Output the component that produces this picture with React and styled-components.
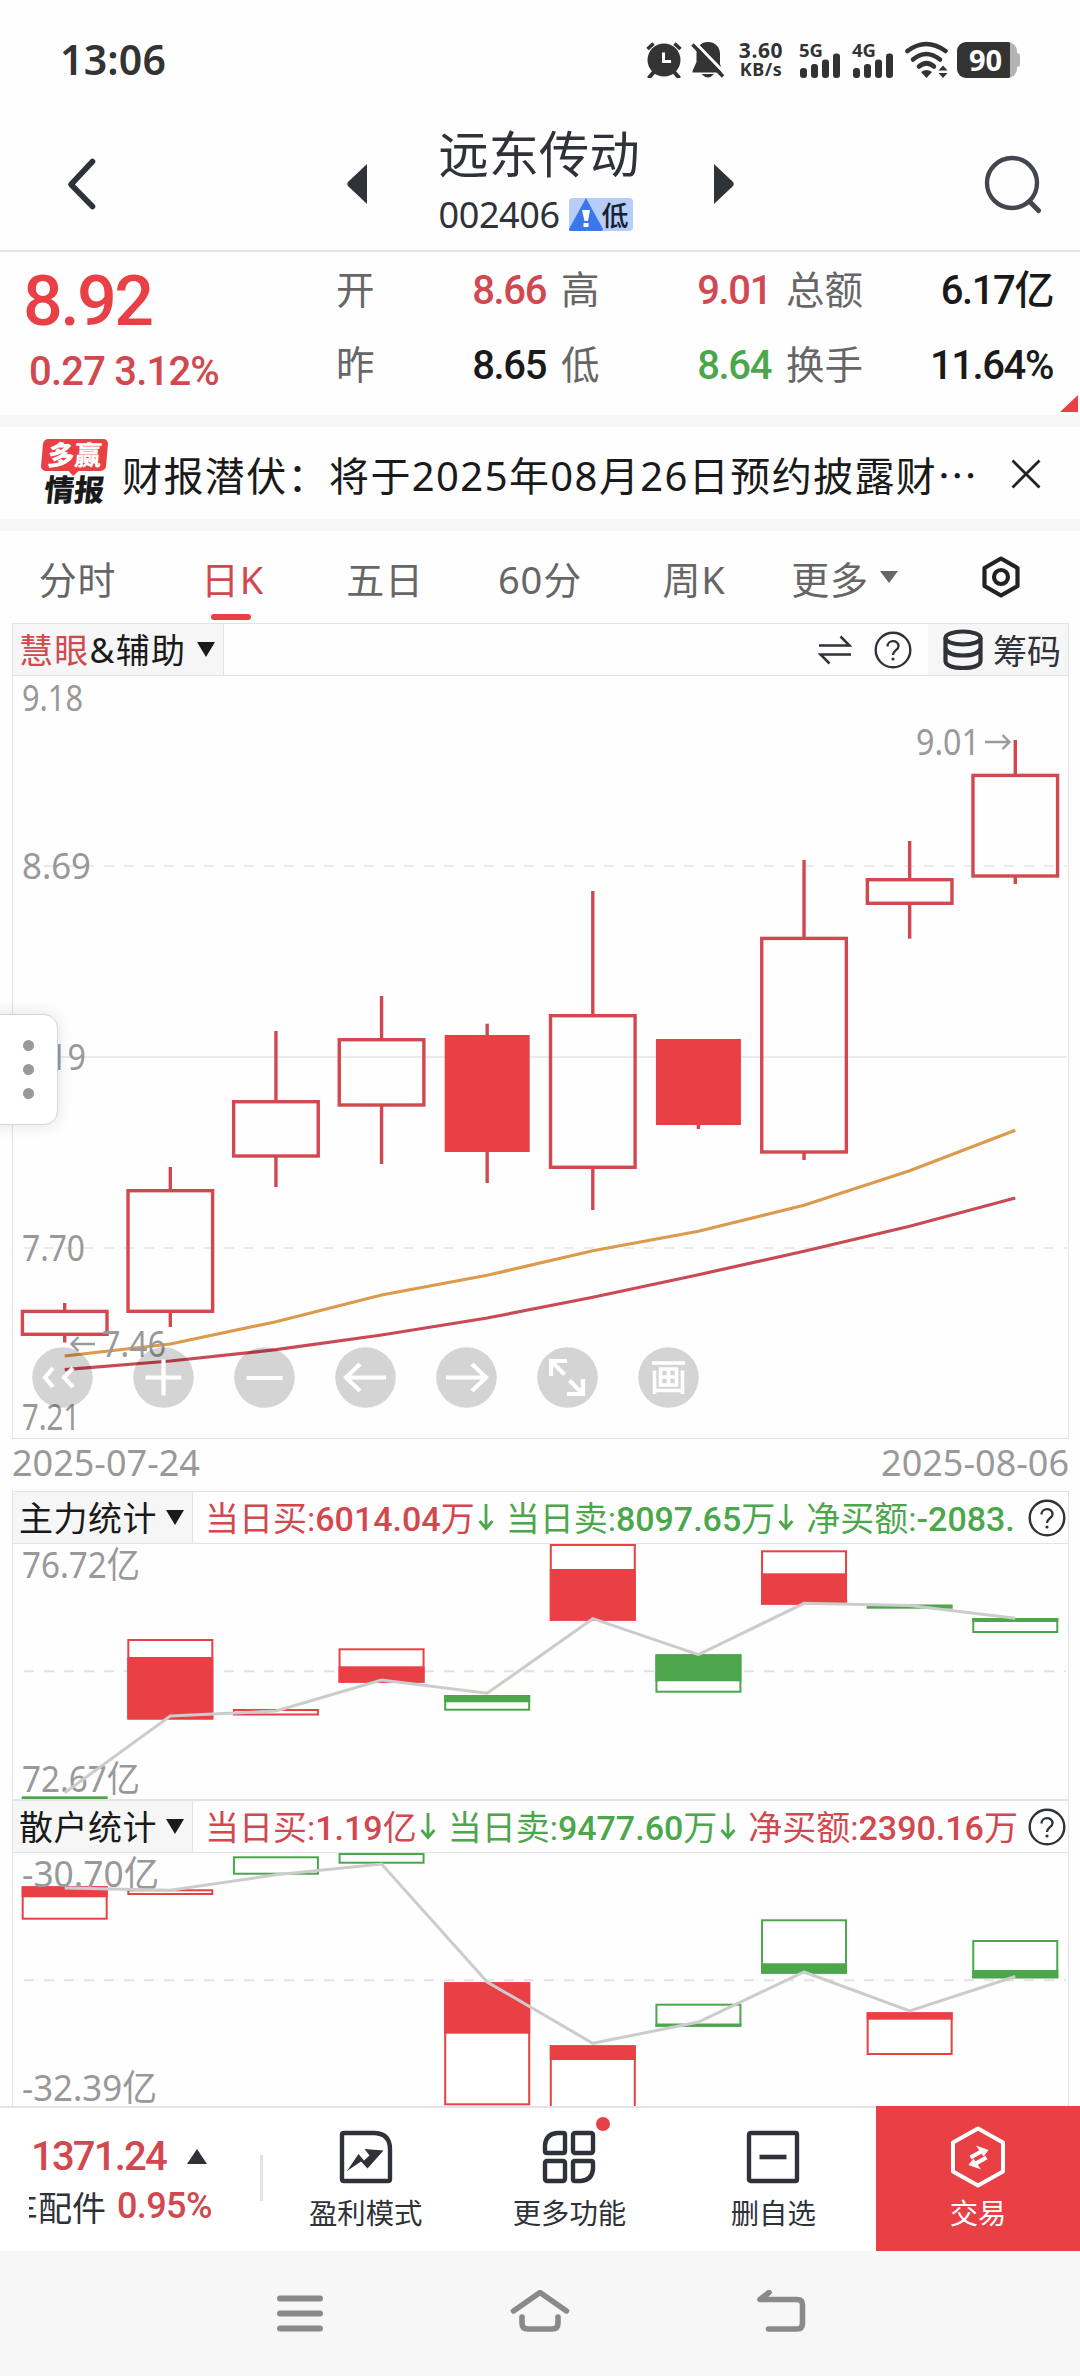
import React from 'react';
import styled, { createGlobalStyle, css } from 'styled-components';

const RED = '#e84045';
const LINE_RED = '#d2484f';
const GREEN = '#4ca64c';
const DARK = '#2f3239';
const BORDER = '#e3e3e3';

const cjk = "'Noto Sans CJK SC', sans-serif";
const sans = `'Noto Sans', ${cjk}`;
const din = `Roboto, ${cjk}`;

const candles = [
    { high: 1303, top: 1309.7, bottom: 1336, low: 1342.5 },
    { high: 1167, top: 1189, bottom: 1313, low: 1327 },
    { high: 1031, top: 1100, bottom: 1157.7, low: 1187 },
    { high: 996, top: 1038, bottom: 1106.7, low: 1164 },
    { high: 1023.7, top: 1035, bottom: 1152, low: 1183, filled: true },
    { high: 891, top: 1014, bottom: 1169, low: 1210 },
    { high: 1039, top: 1039, bottom: 1125, low: 1129, filled: true },
    { high: 860, top: 936.7, bottom: 1153.7, low: 1160 },
    { high: 841, top: 878, bottom: 905, low: 938.7 },
    { high: 740, top: 773.7, bottom: 877.7, low: 884 },
];

const maShort = [1356, 1344, 1321.7, 1295, 1275.3, 1250.7, 1231.3, 1205.3, 1170.7, 1130.3];
const maLong = [1369.7, 1361, 1349.7, 1335, 1318, 1297.3, 1274.7, 1251.3, 1226.3, 1198];

// top / bottom of every bar, and the part of it that is filled
const mainBars = [
    { t: 1796.3, b: 1799, f: [1796.3, 1799], c: GREEN },
    { t: 1639, b: 1719.5, f: [1657, 1719.5], c: RED },
    { t: 1709, b: 1715.5, c: RED },
    { t: 1648.3, b: 1682.7, f: [1666.3, 1682.7], c: RED },
    { t: 1695, b: 1710.7, f: [1695, 1702.3], c: GREEN },
    { t: 1544, b: 1620.7, f: [1569, 1620.7], c: RED },
    { t: 1654.3, b: 1692.7, f: [1654.3, 1681.3], c: GREEN },
    { t: 1550.3, b: 1604.7, f: [1573.3, 1604.7], c: RED },
    { t: 1604.5, b: 1608.7, f: [1604.5, 1608.7], c: GREEN },
    { t: 1618, b: 1633, f: [1618, 1622], c: GREEN },
];
const mainLine = [1792.7, 1716, 1711, 1680, 1693.3, 1618.7, 1654.7, 1603.3, 1605.5, 1618.3];

const retailBars = [
    { t: 1886.3, b: 1919.7, f: [1886.3, 1897.3], c: RED },
    { t: 1889.3, b: 1895, c: RED },
    { t: 1856.3, b: 1874.7, c: GREEN },
    { t: 1853, b: 1863.7, c: GREEN },
    { t: 1982.3, b: 2105.3, f: [1982.3, 2033.7], c: RED },
    { t: 2045.3, b: 2120, f: [2045.3, 2060], c: RED },
    { t: 2003.7, b: 2026.7, f: [2023.5, 2026.7], c: GREEN },
    { t: 1919.3, b: 1973.7, f: [1963.3, 1973.7], c: GREEN },
    { t: 2012.3, b: 2055, f: [2012.3, 2019.7], c: RED },
    { t: 1940, b: 1978.3, f: [1970, 1978.3], c: GREEN },
];
const retailLine = [1888, 1890.3, 1874.7, 1864, 1982, 2043.3, 2022, 1972, 2011, 1976.5];

const xAt = (i) => 64.7 + i * 105.62;
const toPoints = (ys) => ys.map((y, i) => `${xAt(i)},${y}`).join(' ');

/* ---------- small icons ---------- */

const Alarm = () => (
    <svg width="38" height="38" viewBox="0 0 38 38">
        <circle cx="19" cy="20" r="16.5" fill="#333" />
        <path d="M2.5 9 8.5 3.5M35.5 9 29.5 3.5" stroke="#333" strokeWidth="3.6" />
        <path d="M8 33 4.5 37M30 33 33.5 37" stroke="#333" strokeWidth="4" strokeLinecap="round" />
        <path d="M18.5 12.5V21.5H26" fill="none" stroke="#fff" strokeWidth="3" />
    </svg>
);

const BellOff = () => (
    <svg width="34" height="38" viewBox="0 0 34 38">
        <path d="M17 2C9 2 5.5 8 5.5 14V22L1.5 31V32.5H32L29 24V14C29 8 25 2 17 2Z" fill="#333" />
        <path d="M10.5 34H23Q17 41 10.5 34Z" fill="#333" />
        <path d="M4 2.5 34 33.5" stroke="#fff" strokeWidth="3" />
        <path d="M1.5 4.5 32 36.5" stroke="#333" strokeWidth="3.4" />
    </svg>
);

const Signal = () => (
    <svg width="42" height="26" viewBox="0 0 42 26">
        <rect x="1" y="15" width="7" height="10" rx="3" fill="#333" />
        <rect x="12" y="11" width="7" height="14" rx="3" fill="#333" />
        <rect x="23" y="6.5" width="7" height="18.5" rx="3" fill="#333" />
        <rect x="34" y="0.5" width="7" height="24.5" rx="3" fill="#333" />
    </svg>
);

const Wifi = () => (
    <svg width="46" height="38" viewBox="0 0 46 38">
        <g fill="none" stroke="#333" strokeWidth="4.6" strokeLinecap="round">
            <path d="M3.5 11Q22 -3 41.5 11" />
            <path d="M9 19.5Q22 8.5 36 19.5" />
            <path d="M15 26.5Q22.5 20 30 26.5" />
        </g>
        <path d="M17 32Q22.5 28 28 32L22.5 38Z" fill="#333" />
        <path d="M34.5 30.5 39 25.5 43.5 30.5ZM34.5 33 39 38 43.5 33Z" fill="#333" />
    </svg>
);

const Help = () => (
    <svg width="38" height="38" viewBox="0 0 38 38">
        <circle cx="19" cy="19" r="17.3" fill="#fff" stroke={DARK} strokeWidth="2.4" />
        <path d="M13.5 15.5C13.5 8.5 24.5 8.5 24.5 15.2C24.5 19 19 19.5 19 24" fill="none" stroke={DARK} strokeWidth="2.3" />
        <circle cx="19" cy="28" r="1.6" fill={DARK} />
    </svg>
);

const DownArrow = ({ color = GREEN }) => (
    <svg width="16" height="28" viewBox="0 0 16 28">
        <path d="M8 1V25M1.5 18 8 25.5 14.5 18" fill="none" stroke={color} strokeWidth="2.8" />
    </svg>
);

const Stack = () => (
    <svg width="42" height="42" viewBox="0 0 42 42">
        <g fill="none" stroke={DARK} strokeWidth="4.2">
            <ellipse cx="21" cy="9" rx="17.5" ry="6.5" />
            <path d="M3.5 9V32C3.5 36.5 11 39 21 39S38.5 36.5 38.5 32V9" />
            <path d="M3.5 19.5C5 24 12 26.5 21 26.5S37 24 38.5 19.5" />
        </g>
    </svg>
);

/* ---------- charts ---------- */

const Axis = ({ x = 22, y, w, children }) => (
    <AxisText x={x} y={y} textLength={w} lengthAdjust="spacingAndGlyphs">{children}</AxisText>
);

const SubChart = ({ top, height, mid, bars, line, labels }) => (
    <ChartSvg width="1056" height={height} viewBox={`12 ${top} 1056 ${height}`}>
        <line x1="24" x2="1066" y1={mid} y2={mid} stroke="#e2e2e2" strokeWidth="2" strokeDasharray="10 10" />
        {bars.map(({ t, b, f, c }, i) => (
            <g key={i}>
                {b - t > 5 && (
                    <rect x={xAt(i) - 42} y={t + 1} width="84" height={b - t - 2} fill="#fff" stroke={c} strokeWidth="2" />
                )}
                {f && <rect x={xAt(i) - 43} y={f[0]} width="86" height={f[1] - f[0]} fill={c} />}
            </g>
        ))}
        {labels.map(([text, y, w]) => (
            <Axis key={text} y={y} w={w}>{text}</Axis>
        ))}
        <polyline points={toPoints(line)} fill="none" stroke="#ccc" strokeWidth="3" />
    </ChartSvg>
);

const CandleChart = () => (
    <ChartSvg width="1056" height="762" viewBox="12 676 1056 762">
        <g stroke="#ebebeb" strokeWidth="2">
            <line x1="44" x2="1067" y1="866" y2="866" strokeDasharray="10 10" />
            <line x1="12" x2="1067" y1="1057" y2="1057" />
            <line x1="24" x2="1067" y1="1248" y2="1248" strokeDasharray="10 10" />
        </g>
        {candles.map(({ high, top, bottom, low, filled }, i) => (
            <g key={i} stroke={LINE_RED} strokeWidth="3.4">
                <line x1={xAt(i)} x2={xAt(i)} y1={high} y2={top + 1} />
                <line x1={xAt(i)} x2={xAt(i)} y1={bottom - 1} y2={low} />
                {filled ? (
                    <rect x={xAt(i) - 42.5} y={top} width="85" height={bottom - top} fill={RED} stroke="none" />
                ) : (
                    <rect x={xAt(i) - 42.3} y={top + 1.7} width="84.6" height={bottom - top - 3.4} fill="none" />
                )}
            </g>
        ))}
        <polyline points={toPoints(maShort)} fill="none" stroke="#db9a4c" strokeWidth="3.2" />
        <polyline points={toPoints(maLong)} fill="none" stroke="#c94a55" strokeWidth="3.2" />
        <Axis y={711} w={61}>9.18</Axis>
        <Axis y={879} w={69}>8.69</Axis>
        <Axis y={1070} w={64}>8.19</Axis>
        <Axis y={1261} w={63}>7.70</Axis>
        <Axis y={1430} w={58}>7.21</Axis>
        <Axis x={916} y={755} w={64}>9.01</Axis>
        <Axis x={102} y={1357} w={64}>7.46</Axis>
        <g fill="none" stroke="#999" strokeWidth="2.4">
            <path d="M985 742H1009M1002.5 735 1009.5 742 1002.5 749" />
            <path d="M95 1344H72M78.5 1337 71.5 1344 78.5 1351" />
        </g>
    </ChartSvg>
);

const controls = [
    'M21 21 13 30.5 21 40M41 21 32 30.5 41 40',
    'M30.5 12.5V48.5M12.5 30.5H48.5',
    'M12.5 31H48.5',
    'M51 30.5H12M25 17 11 30.5 25 44',
    'M10 30.5H49M36 17 50 30.5 36 44',
    'M14 29V14H30M14 14 27.5 27.5M46 32V47H30M46 47 32.5 33.5',
];

const App = () => {
    return (
        <>
            <GlobalStyle />
            <Screen>
                <StatusBar>
                    <Clock>13:06</Clock>
                    <StatusRight>
                        <Alarm />
                        <BellBox><BellOff /></BellBox>
                        <Speed><b>3.60</b><span>KB/s</span></Speed>
                        <Network><span>5G</span><Signal /></Network>
                        <Network $last><span>4G</span><Signal /></Network>
                        <Wifi />
                        <Battery><span>90</span></Battery>
                    </StatusRight>
                </StatusBar>

                <Header>
                    <svg width="34" height="54" viewBox="0 0 34 54">
                        <path d="M28.5 4.5 7 27.5 28.5 49.5" fill="none" stroke={DARK} strokeWidth="5.6" strokeLinecap="round" strokeLinejoin="round" />
                    </svg>
                    <TitleGroup>
                        <svg width="20" height="40" viewBox="0 0 20 40"><path d="M20 0V40L1.5 22.5Q-1 20 1.5 17.5Z" fill={DARK} /></svg>
                        <Title>
                            <h1>远东传动</h1>
                            <CodeRow>
                                <span>002406</span>
                                <RiskTag>
                                    <svg width="34" height="33" viewBox="0 0 34 33">
                                        <path d="M17 0 34 31Q34 33 32 33H2Q-1 33 0.5 30Z" fill="#3b77ec" />
                                        <path d="M13 12H21L19 23H15.5Z" fill="#fff" />
                                        <rect x="14.5" y="25" width="5" height="4" fill="#fff" />
                                    </svg>
                                    <em>低</em>
                                </RiskTag>
                            </CodeRow>
                        </Title>
                        <svg width="20" height="40" viewBox="0 0 20 40"><path d="M0 0V40L18.5 22.5Q21 20 18.5 17.5Z" fill={DARK} /></svg>
                    </TitleGroup>
                    <svg width="58" height="60" viewBox="0 0 58 60">
                        <circle cx="28" cy="29" r="25" fill="none" stroke="#44464f" strokeWidth="4.4" />
                        <path d="M45.5 47.5 54.5 56.5" stroke="#44464f" strokeWidth="5" strokeLinecap="round" />
                    </svg>
                </Header>

                <Quote>
                    <Price>
                        <strong>8.92</strong>
                        <span>0.27 3.12%</span>
                    </Price>
                    <QuoteGrid>
                        <Label>开</Label><Value $color={LINE_RED}>8.66</Value>
                        <Label>高</Label><Value $color={LINE_RED}>9.01</Value>
                        <Label>总额</Label><Value>6.17亿</Value>
                        <Label>昨</Label><Value>8.65</Value>
                        <Label>低</Label><Value $color={GREEN}>8.64</Value>
                        <Label>换手</Label><Value>11.64%</Value>
                    </QuoteGrid>
                    <Corner />
                </Quote>

                <News>
                    <NewsLogo>
                        <NewsBubble>多赢</NewsBubble>
                        <NewsWord>情报</NewsWord>
                    </NewsLogo>
                    <NewsText>财报潜伏：将于2025年08月26日预约披露财<i>…</i></NewsText>
                    <svg width="32" height="32" viewBox="0 0 32 32">
                        <path d="M2.5 2.5 29.5 29.5M29.5 2.5 2.5 29.5" stroke="#222" strokeWidth="2.8" />
                    </svg>
                </News>

                <Tabs>
                    <Tab $w={155}>分时</Tab>
                    <Tab $w={155} $active>日K</Tab>
                    <Tab $w={150}>五日</Tab>
                    <Tab $w={160}>60分</Tab>
                    <Tab $w={148}>周K</Tab>
                    <Tab $w={153}>更多<Caret $w={18} $h={12} $color="#666" /></Tab>
                    <Settings>
                        <svg width="38" height="42" viewBox="0 0 38 42">
                            <path d="M19 2.5 35.5 12V30L19 39.5 2.5 30V12Z" fill="none" stroke="#222" strokeWidth="4.2" strokeLinejoin="round" />
                            <circle cx="19" cy="21" r="7" fill="none" stroke="#222" strokeWidth="4.2" />
                        </svg>
                    </Settings>
                </Tabs>

                <Panel>
                    <PanelHead>
                        <PanelName $w={211} $gap={1.3}><span><em>慧眼</em>&amp;辅助</span><Caret $w={18} $h={15} /></PanelName>
                        <HeadTools>
                            <svg width="34" height="32" viewBox="0 0 34 32">
                                <path d="M1 11.5H31.5L22.5 2.5M33 20.5H2.5L11.5 29.5" fill="none" stroke={DARK} strokeWidth="2.5" />
                            </svg>
                            <Help />
                            <Chips><Stack />筹码</Chips>
                        </HeadTools>
                    </PanelHead>
                    <CandleChart />
                    <Controls>
                        {controls.map((d, i) => (
                            <svg key={i} width="61" height="61" viewBox="0 0 61 61">
                                <circle cx="30.5" cy="30.5" r="30.3" fill="#000" fillOpacity="0.165" />
                                <path d={d} fill="none" stroke="#fff" strokeWidth="4.2" />
                            </svg>
                        ))}
                        <svg width="61" height="61" viewBox="0 0 61 61">
                            <circle cx="30.5" cy="30.5" r="30.3" fill="#000" fillOpacity="0.165" />
                            <path d="M14 16H47M16.5 23.5V47M44.5 23.5V47M16.5 43.5H44.5M22.5 22H38.5V38H22.5ZM30.5 22V38M22.5 30H38.5" fill="none" stroke="#fff" strokeWidth="3.6" />
                        </svg>
                    </Controls>
                    <SideHandle><i /><i /><i /></SideHandle>
                </Panel>

                <Dates><span>2025-07-24</span><span>2025-08-06</span></Dates>

                <Panel>
                    <PanelHead>
                        <PanelName $w={180} $gap={0.5}>主力统计<Caret $w={18} $h={15} /></PanelName>
                        <Stats>
                            <Stat $color={LINE_RED}>当日买:<b>6014.04</b>万</Stat><DownArrow />
                            <Stat $color={GREEN}>当日卖:<b>8097.65</b>万</Stat><DownArrow />
                            <Stat $color={GREEN}>净买额:<b>-2083.</b></Stat>
                        </Stats>
                        <Help />
                    </PanelHead>
                    <SubChart
                        top={1544} height={255} mid={1671.3} bars={mainBars} line={mainLine}
                        labels={[['76.72亿', 1578, 118], ['72.67亿', 1791.5, 118]]}
                    />
                </Panel>
                <Panel $open>
                    <PanelHead>
                        <PanelName $w={180} $gap={0.5}>散户统计<Caret $w={18} $h={15} /></PanelName>
                        <Stats>
                            <Stat $color={LINE_RED}>当日买:<b>1.19</b>亿</Stat><DownArrow />
                            <Stat $color={GREEN}>当日卖:<b>9477.60</b>万</Stat><DownArrow />
                            <Stat $color={LINE_RED}>净买额:<b>2390.16</b>万</Stat>
                        </Stats>
                        <Help />
                    </PanelHead>
                    <SubChart
                        top={1853} height={253} mid={1980.3} bars={retailBars} line={retailLine}
                        labels={[['-30.70亿', 1887, 137], ['-32.39亿', 2100.5, 135]]}
                    />
                </Panel>

                <BottomBar>
                    <Index>
                        <IndexTop>1371.24<svg width="20" height="15" viewBox="0 0 20 15"><path d="M10 0 20 15H0Z" fill={DARK} /></svg></IndexTop>
                        <IndexName><Ticker><span>汽车配件</span></Ticker><b>0.95%</b></IndexName>
                    </Index>
                    <Separator />
                    <Action $w={206}>
                        <svg width="54" height="54" viewBox="0 0 54 54">
                            <path d="M5 3H36Q51 4 51 19V49Q51 51 49 51H5Q3 51 3 49V5Q3 3 5 3Z" fill="none" stroke={DARK} strokeWidth="4.4" />
                            <path d="M8 41 19.5 24 25 30.5 30.5 25.5 25.5 19 44.5 20.5 28.5 38.5 22 31.5Z" fill={DARK} />
                        </svg>
                        盈利模式
                    </Action>
                    <Action $w={202}>
                        <svg width="54" height="54" viewBox="0 0 54 54">
                            <g fill="none" stroke={DARK} strokeWidth="4.4">
                                <path d="M15 3H21Q23 3 23 5V21Q23 23 21 23H5Q3 23 3 21V15Q4 4 15 3Z" />
                                <rect x="31" y="3" width="20" height="20" rx="2" />
                                <rect x="3" y="31" width="20" height="20" rx="2" />
                                <path d="M33 31H49Q51 31 51 33V39Q50 50 39 51H33Q31 51 31 49V33Q31 31 33 31Z" />
                            </g>
                        </svg>
                        更多功能
                        <Dot />
                    </Action>
                    <Action $w={206}>
                        <svg width="54" height="54" viewBox="0 0 54 54">
                            <rect x="3" y="3" width="48" height="48" rx="1.5" fill="none" stroke={DARK} strokeWidth="4.4" />
                            <path d="M13.5 27H40.5" stroke={DARK} strokeWidth="4.6" />
                        </svg>
                        删自选
                    </Action>
                    <Action $w={204} $primary>
                        <svg width="58" height="62" viewBox="0 0 58 62">
                            <path d="M29 2.5 54 16.5V45.5L29 59.5 4 45.5V16.5Z" fill="none" stroke="#fff" strokeWidth="4" strokeLinejoin="round" />
                            <path d="M21.500 31.500 34 24.500" fill="none" stroke="#fff" strokeWidth="4.2" />
                            <path d="M27 19.5 39.500 24 34.500 30.500Z" fill="#fff" />
                            <path d="M37.500 31.500 25 38.500" fill="none" stroke="#fff" strokeWidth="4.2" />
                            <path d="M32 43.5 19.500 39 24.500 32.500Z" fill="#fff" />
                        </svg>
                        交易
                    </Action>
                </BottomBar>

                <NavBar>
                    <svg width="48" height="46" viewBox="0 0 48 46"><path d="M4 8.5H44M4 23.5H44M4 38.5H44" stroke="#8a8a8a" strokeWidth="6" strokeLinecap="round" /></svg>
                    <svg width="60" height="46" viewBox="0 0 60 46">
                        <path d="M3.5 21 30 2.5 56.5 21M12 27V33Q12 39 18 39H42Q48 39 48 33V27" fill="none" stroke="#8a8a8a" strokeWidth="5.6" strokeLinecap="round" strokeLinejoin="round" />
                    </svg>
                    <svg width="50" height="46" viewBox="0 0 50 46">
                        <path d="M13 2.5 4 9.5H41Q46.5 9.5 46.5 15V33Q46.5 39 41 39H12.5" fill="none" stroke="#8a8a8a" strokeWidth="5.6" strokeLinecap="round" strokeLinejoin="round" />
                    </svg>
                </NavBar>
            </Screen>
        </>
    );
};

const GlobalStyle = createGlobalStyle`
* { box-sizing: border-box; }
body { margin: 0; background: #fff; }
svg { display: block; flex-shrink: 0; }
h1 { margin: 0; }
em, i { font-style: normal; }
`;

const Screen = styled.div`
width: 1080px;
height: 2376px;
overflow: hidden;
background: #fefefe;
font-family: ${sans};
color: #1a1a1a;
white-space: nowrap;
`;

const StatusBar = styled.div`
height: 118px;
display: flex;
justify-content: space-between;
padding: 40px 63px 0 60px;
color: #333;
`;
const Clock = styled.div`
font-size: 41px;
font-weight: 600;
line-height: 38px;
letter-spacing: 0.2px;
`;
const StatusRight = styled.div`
display: flex;
height: 38px;
`;
const BellBox = styled.div`
margin: 0 13px 0 8px;
`;
const Speed = styled.div`
display: flex;
flex-direction: column;
width: 46px;
font-size: 21px;
line-height: 20px;
align-items: center;
b { font-weight: 700; letter-spacing: 0.6px; }
span { font-size: 18px; font-weight: 700; line-height: 18px; letter-spacing: 0.5px; }
`;
const Network = styled.div`
width: 43px;
margin-left: ${({ $last }) => ($last ? '10px' : '15px')};
margin-right: ${({ $last }) => ($last ? '9px' : '0')};
span {
    display: block;
    height: 13px;
    font-size: 18.5px;
    font-weight: 700;
    line-height: 19px;
}
`;
const Battery = styled.div`
width: 60px;
height: 36px;
margin: 2px 0 0 7px;
border-radius: 9px;
background: linear-gradient(90deg, #333 53px, #b3b3b3 53px);
color: #fff;
font-size: 29px;
font-weight: 700;
line-height: 36px;
padding-left: 12px;
position: relative;
&::after {
    content: '';
    position: absolute;
    right: -3px;
    top: 11px;
    width: 4px;
    height: 14px;
    border-radius: 0 3px 3px 0;
    background: #b3b3b3;
}
`;

const Header = styled.header`
height: 134px;
border-bottom: 2px solid ${BORDER};
display: flex;
align-items: center;
justify-content: space-between;
padding: 0 38px 0 64px;
`;
const TitleGroup = styled.div`
display: flex;
align-items: center;
margin-right: 2px;
`;
const Title = styled.div`
width: 200px;
margin: 0 75px 0 72px;
height: 130px;
h1 {
    font-family: ${cjk};
    font-size: 50.3px;
    font-weight: 400;
    line-height: 65px;
    height: 70px;
    color: ${DARK};
}
`;
const CodeRow = styled.div`
display: flex;
align-items: center;
justify-content: space-between;
height: 50px;
padding-right: 6px;
color: ${DARK};
font-size: 36px;
letter-spacing: -0.4px;
`;
const RiskTag = styled.div`
display: flex;
align-items: center;
width: 64px;
height: 33px;
border-radius: 4px;
background: #b5cdf8;
color: #16202f;
em { font: 500 27px/33px ${cjk}; margin-left: -1px; }
`;

const Quote = styled.section`
height: 163px;
display: flex;
position: relative;
font-family: ${din};
`;
const Price = styled.div`
width: 321px;
padding-left: 23px;
color: ${RED};
display: flex;
flex-direction: column;
strong {
    font-size: 70px;
    font-weight: 500;
    line-height: 98px;
    letter-spacing: -2.6px;
}
span {
    font-size: 40px;
    font-weight: 500;
    line-height: 44px;
    letter-spacing: -0.8px;
    padding-left: 6px;
    color: ${LINE_RED};
}
`;
const QuoteGrid = styled.div`
display: grid;
grid-template-columns: 75px 150px 80px 145px 115px 167px;
grid-template-rows: 75px 75px;
margin-top: 1px;
flex: none;
`;
const Label = styled.span`
font-size: 38.5px;
line-height: 75px;
color: #666;
padding-left: 15px;
`;
const Value = styled.span`
font-size: 40px;
font-weight: 500;
line-height: 75px;
letter-spacing: -1.4px;
text-align: right;
color: ${({ $color }) => $color || '#1a1a1a'};
`;
const Corner = styled.i`
position: absolute;
right: 2px;
bottom: 3px;
border-left: 18px solid transparent;
border-bottom: 17px solid ${RED};
`;

const News = styled.section`
height: 116px;
border-top: 12px solid #f6f6f6;
border-bottom: 12px solid #f6f6f6;
display: flex;
align-items: center;
padding: 2px 38px 0 40px;
`;
const NewsLogo = styled.div`
width: 69px;
height: 66px;
margin-right: 13px;
margin-top: -5px;
font-family: ${cjk};
font-weight: 900;
text-align: center;
`;
const NewsBubble = styled.div`
height: 32px;
width: 65px;
margin-left: 2px;
border-radius: 5px;
background: ${RED};
color: #fff;
font-size: 27px;
line-height: 30px;
transform: skewX(-5deg);
position: relative;
&::after {
    content: '';
    position: absolute;
    left: 27px;
    bottom: -5px;
    border: 6px solid transparent;
    border-top-color: ${RED};
    border-bottom: 0;
}
`;
const NewsWord = styled.div`
font-size: 30px;
line-height: 34px;
transform: skewX(-6deg);
`;
const NewsText = styled.div`
flex: 1;
font-family: ${sans};
font-size: 40px;
letter-spacing: 1.4px;
i { font-family: ${cjk}; }
`;

const Tabs = styled.nav`
height: 92px;
display: flex;
`;
const Tab = styled.div`
width: ${({ $w }) => $w}px;
height: 92px;
display: flex;
align-items: center;
justify-content: center;
gap: 11px;
font-size: 38px;
letter-spacing: 0.8px;
color: #666;
${({ $active }) => $active && css`
    color: ${LINE_RED};
    position: relative;
    &::after {
        content: '';
        position: absolute;
        left: 56px;
        bottom: 3px;
        width: 40px;
        height: 6px;
        border-radius: 3px;
        background: ${RED};
    }
`}
`;
const Settings = styled.div`
margin: 25px 0 0 61px;
`;
const Caret = styled.i`
border-left: ${({ $w }) => $w / 2}px solid transparent;
border-right: ${({ $w }) => $w / 2}px solid transparent;
border-top: ${({ $h }) => $h}px solid ${({ $color }) => $color || '#1a1a1a'};
`;

const Panel = styled.section`
position: relative;
width: 1057px;
margin-left: 12px;
border: 1.5px solid ${BORDER};
border-bottom-width: ${({ $open }) => ($open ? 0 : 1)}px;
border-top-width: 1px;
`;
const PanelHead = styled.div`
height: 52px;
border-bottom: 1.5px solid ${BORDER};
display: flex;
align-items: center;
`;
const PanelName = styled.div`
width: ${({ $w }) => $w}px;
height: 51px;
flex: none;
padding: 0 8px 0 6px;
display: flex;
align-items: center;
background: #f6f6f6;
border-right: 1px solid ${BORDER};
font-size: 34px;
line-height: 48px;
letter-spacing: ${({ $gap }) => $gap}px;
em { color: ${LINE_RED}; }
${Caret} { margin-left: auto; }
`;
const HeadTools = styled.div`
margin-left: auto;
display: flex;
align-items: center;
gap: 22px;
`;
const Chips = styled.div`
width: 140px;
height: 51px;
margin-left: -6px;
padding-left: 14px;
display: flex;
align-items: center;
gap: 9px;
background: #f6f6f6;
color: ${DARK};
font-size: 34px;
`;
const ChartSvg = styled.svg`
display: block;
margin-left: -1px;
overflow: visible;
`;
const AxisText = styled.text`
font-family: ${sans};
font-size: 36px;
fill: #999;
`;
const Controls = styled.div`
position: absolute;
left: 19px;
bottom: 30px;
display: flex;
gap: 40px;
`;
const SideHandle = styled.div`
position: absolute;
left: -25px;
top: 390px;
width: 70px;
height: 111px;
border: 1px solid #d5d5d5;
border-radius: 0 14px 14px 0;
background: #fff;
box-shadow: 0 0 16px rgba(0, 0, 0, 0.12);
display: flex;
flex-direction: column;
align-items: center;
justify-content: center;
gap: 13px;
padding-left: 11px;
i {
    width: 11px;
    height: 11px;
    border-radius: 50%;
    background: #999;
}
`;
const Dates = styled.div`
height: 52px;
display: flex;
justify-content: space-between;
padding: 0 11px 0 12px;
font-size: 36px;
line-height: 48px;
color: #999;
`;
const Stats = styled.div`
width: 827px;
margin-right: 8px;
padding: 0 0 2px 12px;
display: flex;
align-items: center;
overflow: hidden;
svg { margin: 0 12px 0 3px; }
`;
const Stat = styled.span`
font-family: ${din};
font-size: 34px;
color: ${({ $color }) => $color};
b { font-weight: 500; }
`;

const BottomBar = styled.footer`
height: 145px;
border-top: 2px solid ${BORDER};
display: flex;
position: relative;
background: #fff;
`;
const Index = styled.div`
width: 260px;
padding: 26px 0 0 29px;
font-family: ${din};
color: ${LINE_RED};
`;
const IndexTop = styled.div`
display: flex;
align-items: center;
gap: 21px;
height: 44px;
padding-left: 2px;
font-size: 40px;
font-weight: 500;
letter-spacing: -1.8px;
`;
const IndexName = styled.div`
display: flex;
align-items: center;
gap: 11px;
height: 56px;
font-size: 34px;
b { font-size: 36px; font-weight: 500; letter-spacing: -0.6px; }
`;
const Ticker = styled.div`
width: 77px;
display: flex;
justify-content: flex-end;
overflow: hidden;
color: ${DARK};
`;
const Separator = styled.div`
width: 3px;
height: 46px;
margin-top: 47px;
background: #e3e3e3;
`;
const Action = styled.div`
width: ${({ $w }) => $w}px;
display: flex;
flex-direction: column;
align-items: center;
padding-top: 22px;
font-size: 28.4px;
line-height: 60px;
color: ${({ $primary }) => ($primary ? '#fff' : DARK)};
position: relative;
svg { margin-bottom: ${({ $primary }) => ($primary ? -5 : -1)}px; }
${({ $primary }) => $primary && css`
    margin-left: auto;
    margin-top: -2px;
    padding-top: 20px;
    background: ${RED};
`}
`;
const Dot = styled.i`
position: absolute;
right: 60px;
top: 9px;
width: 14px;
height: 14px;
border-radius: 50%;
background: ${RED};
`;
const NavBar = styled.nav`
height: 126px;
background: #f7f7f7;
display: flex;
justify-content: space-between;
padding: 39px 274px 0 276px;
`;

export default App;
